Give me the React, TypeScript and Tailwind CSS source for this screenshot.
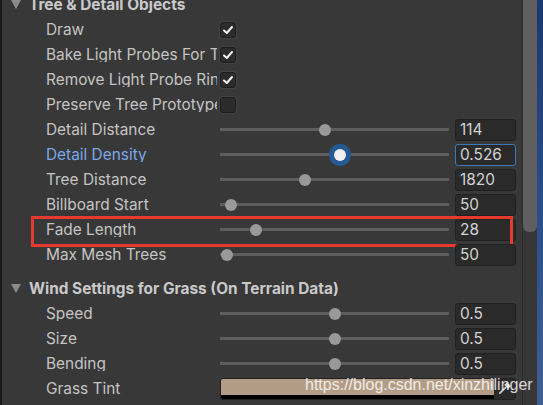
import React from 'react';

type Row =
  | { kind: 'check'; label: string; checked: boolean }
  | { kind: 'slider'; label: string; value: string; t: number; focused?: boolean; boxed?: boolean };

const treeRows: Row[] = [
  { kind: 'check', label: 'Draw', checked: true },
  { kind: 'check', label: 'Bake Light Probes For Trees', checked: true },
  { kind: 'check', label: 'Remove Light Probe Ringing', checked: true },
  { kind: 'check', label: 'Preserve Tree Prototype Layers', checked: false },
  { kind: 'slider', label: 'Detail Distance', value: '114', t: 0.456 },
  { kind: 'slider', label: 'Detail Density', value: '0.526', t: 0.526, focused: true },
  { kind: 'slider', label: 'Tree Distance', value: '1820', t: 0.364 },
  { kind: 'slider', label: 'Billboard Start', value: '50', t: 0.0226 },
  { kind: 'slider', label: 'Fade Length', value: '28', t: 0.14, boxed: true },
  { kind: 'slider', label: 'Max Mesh Trees', value: '50', t: 0.005 },
];

const windRows: Row[] = [
  { kind: 'slider', label: 'Speed', value: '0.5', t: 0.5 },
  { kind: 'slider', label: 'Size', value: '0.5', t: 0.5 },
  { kind: 'slider', label: 'Bending', value: '0.5', t: 0.5 },
];

function Header({ title, className = '' }: { title: string; className?: string }) {
  return (
    <div className={`h-[25px] flex items-center pl-[9px] ${className}`}>
      <svg width="10" height="9" viewBox="0 0 10 9" className="mr-[8px]">
        <path d="M0 0 H10 L5 9 Z" fill="#8b8b8b" />
      </svg>
      <span className="font-bold text-[#c9c9c9]">{title}</span>
    </div>
  );
}

function Label({ text, focused }: { text: string; focused?: boolean }) {
  return (
    <div
      className={`w-[171px] mr-[3px] overflow-hidden whitespace-nowrap ${
        focused ? 'text-[#7ba8ea]' : 'text-[#c4c4c4]'
      }`}
    >
      {text}
    </div>
  );
}

function Checkbox({ checked }: { checked: boolean }) {
  return (
    <div className="w-[16px] h-[16px] rounded-[3px] bg-[#2b2b2b] border border-[#1e1e1e] shadow-[0_0_0_1px_#424242] flex items-center justify-center">
      {checked && (
        <svg width="12" height="12" viewBox="0 0 12 12">
          <path d="M2 6.5 L4.8 9 L10 3" stroke="#f2f2f2" strokeWidth="2" fill="none" strokeLinecap="round" strokeLinejoin="round" />
        </svg>
      )}
    </div>
  );
}

function Slider({ t, focused }: { t: number; focused?: boolean }) {
  return (
    <div className="relative w-[229px] h-[25px] flex items-center">
      <div className="w-full h-[3px] bg-[#5e5e5e]" />
      <div
        className="absolute top-1/2 w-[12px] h-[12px] -translate-y-1/2"
        style={{ left: `${t * 217}px` }}
      >
        {focused ? (
          <div className="absolute -left-[5px] -top-[5px] w-[22px] h-[22px] rounded-full bg-[#245a91] flex items-center justify-center">
            <div className="w-[12px] h-[12px] rounded-full bg-[#f0f0f0]" />
          </div>
        ) : (
          <div className="w-[12px] h-[12px] rounded-full bg-[#999999]" />
        )}
      </div>
    </div>
  );
}

function NumberField({ value, focused }: { value: string; focused?: boolean }) {
  return (
    <div
      className={`ml-[6px] w-[61px] h-[22px] rounded-[3px] bg-[#2a2a2a] border flex items-center pl-[4px] text-[#d2d2d2] ${
        focused ? 'border-[#3a79bb]' : 'border-[#212121]'
      }`}
    >
      {value}
    </div>
  );
}

function PropRow({ row }: { row: Row }) {
  return (
    <div className="relative h-[25px] flex items-center pl-[44px]">
      <Label text={row.label} focused={row.kind === 'slider' && row.focused} />
      {row.kind === 'check' ? (
        <Checkbox checked={row.checked} />
      ) : (
        <>
          <Slider t={row.t} focused={row.focused} />
          <NumberField value={row.value} focused={row.focused} />
        </>
      )}
      {row.kind === 'slider' && row.boxed && (
        <div className="absolute left-[29px] top-[-1px] w-[482px] h-[31px] border-[3px] border-[#e8392f] pointer-events-none" />
      )}
    </div>
  );
}

function ColorRow() {
  return (
    <div className="relative h-[25px] flex items-center pl-[44px]">
      <Label text="Grass Tint" />
      <div className="flex w-[296px] h-[22px] rounded-[3px] border border-[#212121] bg-[#2a2a2a] overflow-hidden">
        <div className="w-[273px] flex flex-col">
          <div className="flex-1 bg-[#b39c86]" />
          <div className="h-[4px] bg-black" />
        </div>
        <div className="flex-1 flex items-center justify-center">
          <svg width="13" height="13" viewBox="0 0 14 14">
            <path d="M2 12 L8 6" stroke="#cfcfcf" strokeWidth="2" strokeLinecap="round" />
            <path d="M8 3 L11 6 M9.5 1.5 L12.5 4.5" stroke="#cfcfcf" strokeWidth="2.2" strokeLinecap="round" />
          </svg>
        </div>
      </div>
    </div>
  );
}

export default function App() {
  return (
    <div
      className="relative w-[543px] h-[405px] overflow-hidden flex text-[15.4px] leading-none"
      style={{ fontFamily: 'Inter, "Noto Sans", sans-serif' }}
    >
      <div className="w-[2px] bg-[#191919]" />
      <div className="flex-1 bg-[#383838] overflow-hidden">
        <Header title="Tree & Detail Objects" className="-mt-[8px]" />
        {treeRows.map((r) => (
          <PropRow key={r.label} row={r} />
        ))}
        <Header title="Wind Settings for Grass (On Terrain Data)" className="mt-[9px]" />
        {windRows.map((r) => (
          <PropRow key={r.label} row={r} />
        ))}
        <ColorRow />
      </div>
      <div className="w-[15px] bg-[#373737] border-l border-[#2c2c2c] flex flex-col">
        <div className="h-[232px] bg-[#5f5f5f] rounded-b-[6px]" />
      </div>
      <div className="w-[6px] bg-gradient-to-b from-[#1b3770] via-[#2a4c8c] to-[#3f5f94]" />
      <div
        className="absolute left-[305px] top-[377px] text-[16px] leading-none text-white/80 whitespace-nowrap pointer-events-none"
        style={{ fontFamily: '"Liberation Sans", Arial, sans-serif' }}
      >
        https://blog.csdn.net/xinzhilinger
      </div>
    </div>
  );
}
